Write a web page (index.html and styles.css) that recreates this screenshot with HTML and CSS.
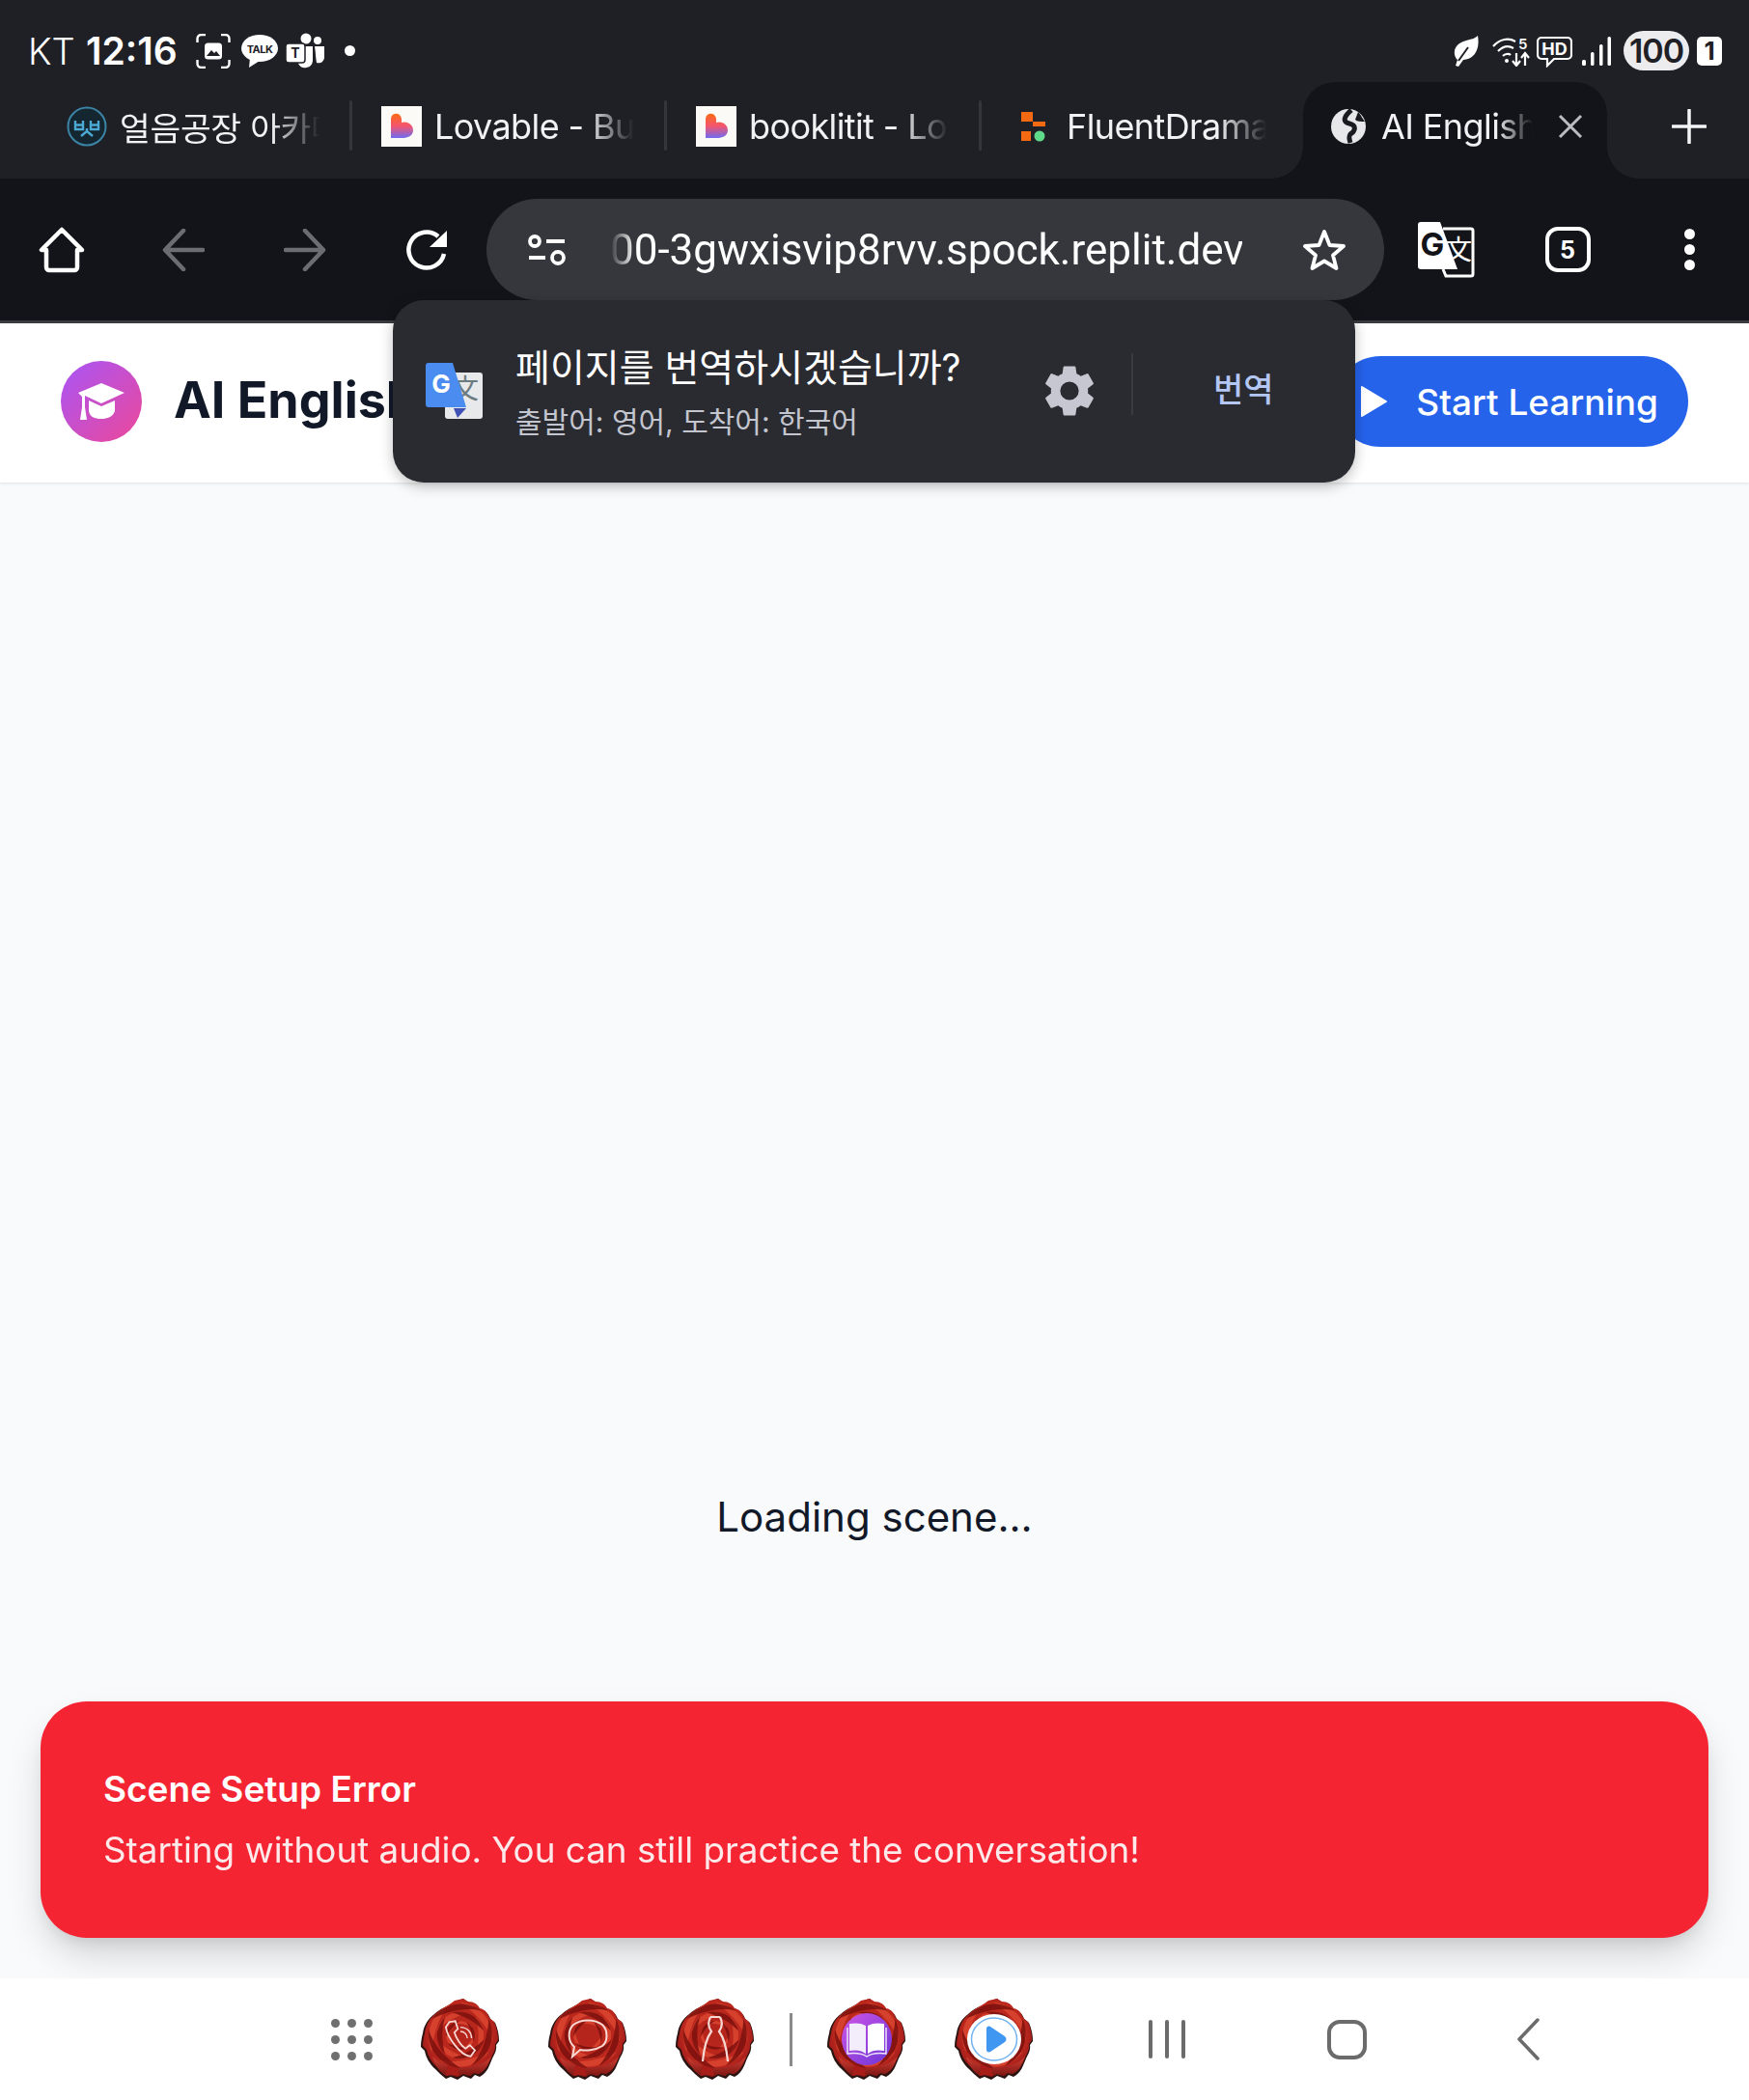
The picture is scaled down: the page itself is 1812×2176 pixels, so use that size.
FILE: index.html
```html
<!DOCTYPE html>
<html lang="en">
<head>
    <meta charset="UTF-8" />
    <meta name="viewport" content="width=device-width, initial-scale=1.0" />
    <title>AI English</title>
    <link rel="stylesheet" href="styles.css">
</head>
<body>

    <svg class="defs" width="0" height="0">
        <defs>
            <radialGradient id="roseFill" cx="50%" cy="45%" r="58%">
                <stop offset="0" stop-color="#b3241b" />
                <stop offset="0.7" stop-color="#bd281d" />
                <stop offset="1" stop-color="#94171a" />
            </radialGradient>
            <linearGradient id="roseBottom" x1="0" y1="0" x2="0" y2="1">
                <stop offset="0" stop-color="#cf3f33" />
                <stop offset="1" stop-color="#7a1412" />
            </linearGradient>
            <linearGradient id="heartFill" x1="0" y1="0" x2="0" y2="1">
                <stop offset="0" stop-color="#fb6a14" />
                <stop offset="0.5" stop-color="#f4556e" />
                <stop offset="1" stop-color="#6f6cf2" />
            </linearGradient>
            <linearGradient id="bookFill" x1="0" y1="0" x2="1" y2="1">
                <stop offset="0" stop-color="#cf55e6" />
                <stop offset="1" stop-color="#6a35d8" />
            </linearGradient>
            <path id="petalBig" d="M41 4 C60 6 76 22 74 44 C69 28 57 15 41 4Z" />
            <path id="petalMid" d="M41 13 C55 14 67 26 65 42 C61 31 52 21 41 13Z" />
            <path id="petalSmall" d="M42 23 C50 24 57 31 56 40 C53 33 48 27 42 23Z" />
            <symbol id="rose" viewBox="0 0 82 84">
                <path fill="#2b1411" d="M35 3 L44 0 L49 4 C55 4 59 7 61 11 C67 12 71 17 72 21 L77 25 C80 32 81 38 81 44 L78 48 C79 54 76 58 74 62 C71 69 69 77 61 81 L56 79 L52 83 L44 80 L38 84 L31 81 L26 83 C21 79 18 76 15 73 C9 68 5 60 4 54 L0 50 C0 44 1 40 2 36 C3 28 8 20 14 16 C20 10 28 8 35 3Z" />
                <path fill="url(#roseFill)" d="M35 2 L44 0 L49 3 C55 3 59 6 61 10 C67 11 70 16 71 20 L76 24 C79 31 80 37 80 43 L77 47 C78 53 75 57 73 61 C70 67 68 74 60 78 L55 77 L51 80 L44 78 L38 81 L31 79 L26 80 C22 77 19 74 17 71 C11 66 7 59 6 53 L2 49 C2 44 3 40 4 36 C5 28 9 20 15 16 C21 10 28 8 35 2Z" />
                <path fill="url(#roseBottom)" d="M12 60 C22 69 34 72 48 71 C58 70 66 67 73 60 C70 67 68 74 60 78 L55 77 L51 80 L44 78 L38 81 L31 79 L26 80 C22 77 19 74 17 71 C15 68 13 64 12 60Z" />
                <path fill="#a81d17" d="M28 66 L38 72 L40 80 L31 79 L26 80Z" />
                <g fill="#db4630" opacity="0.85">
                    <use href="#petalBig" />
                    <use href="#petalBig" transform="rotate(120 41 38)" />
                    <use href="#petalBig" transform="rotate(240 41 38)" />
                    <use href="#petalMid" transform="rotate(40 41 38)" />
                    <use href="#petalMid" transform="rotate(160 41 38)" />
                    <use href="#petalMid" transform="rotate(280 41 38)" />
                    <use href="#petalSmall" transform="rotate(80 41 38)" />
                    <use href="#petalSmall" transform="rotate(200 41 38)" />
                    <use href="#petalSmall" transform="rotate(320 41 38)" />
                </g>
                <g fill="#7c100e" opacity="0.85">
                    <use href="#petalBig" transform="rotate(60 41 38)" />
                    <use href="#petalBig" transform="rotate(180 41 38)" />
                    <use href="#petalBig" transform="rotate(300 41 38)" />
                    <use href="#petalMid" transform="rotate(100 41 38)" />
                    <use href="#petalMid" transform="rotate(220 41 38)" />
                    <use href="#petalMid" transform="rotate(340 41 38)" />
                    <use href="#petalSmall" transform="rotate(20 41 38)" />
                    <use href="#petalSmall" transform="rotate(140 41 38)" />
                    <use href="#petalSmall" transform="rotate(260 41 38)" />
                </g>
            </symbol>
        </defs>
    </svg>

    <div class="statusbar">
        <div class="status-left">
            <span class="carrier">KT</span>
            <span class="clock">12:16</span>
            <svg class="shot-icon" width="36" height="36" viewBox="0 0 36 36" fill="none" stroke="#fff" stroke-width="2.4">
                <path d="M1.500 9 V5 a4 4 0 0 1 4-4 H10 M26 1 h4.500 a4 4 0 0 1 4 4 V9 M34.500 27 v4 a4 4 0 0 1-4 4 H26 M10 35 H5.500 a4 4 0 0 1-4-4 V27" />
                <rect x="9" y="9.500" width="18" height="17" rx="3.500" fill="#fff" stroke="none" />
                <path d="M11 23 l5-6 3 3 2-2 4 5z" fill="#1f2026" stroke="none" />
            </svg>
            <svg class="talk-icon" width="38" height="34" viewBox="0 0 38 34">
                <ellipse cx="19" cy="14" rx="19" ry="14" fill="#fff" />
                <path d="M9 24 L8 34 L19 27z" fill="#fff" />
                <text x="19" y="18.500" class="talk-text">TALK</text>
            </svg>
            <svg class="teams-icon" width="40" height="38" viewBox="0 0 40 38">
                <circle cx="21" cy="6" r="5.500" fill="#fff" />
                <circle cx="33" cy="8" r="4" fill="#fff" />
                <path d="M14 14 H28 V29 a8 8 0 0 1-15 3z" fill="#fff" />
                <path d="M30 14 H40 V25 a6 6 0 0 1-8 6 C31 26 31 20 30 14z" fill="#fff" />
                <rect x="0" y="11" width="20" height="20" rx="3" fill="#fff" stroke="#1f2026" stroke-width="1.500" />
                <text x="10" y="26" class="teams-text">T</text>
            </svg>
            <span class="status-dot"></span>
        </div>
        <div class="status-right">
            <svg width="26" height="32" viewBox="0 0 26 32" fill="#fff">
                <path d="M25 0 C27 11 24 24 10 25 L5 32 L2 31 L4 25 C-1 20 0 12 6 8 C12 4 20 5 25 0Z" />
                <path d="M5 26 L15 12" stroke="#1f2026" stroke-width="2" fill="none" />
            </svg>
            <svg class="wifi-icon" width="40" height="32" viewBox="0 0 40 32" fill="none" stroke="#fff" stroke-width="2.200">
                <path d="M1 11 C8 3 17 2 24 6" />
                <path d="M6 16 C11 11 17 10 22 13" />
                <path d="M11 21 C13 19 17 18 19 20" />
                <circle cx="15" cy="26" r="2" fill="#fff" stroke="none" />
                <text x="27" y="14" class="wifi-text">5</text>
                <path d="M25 18 V30 M21 26 L25 31 L29 26 M34 31 V19 M30 23 L34 18 L38 23" />
            </svg>
            <svg class="hd-icon" width="37" height="34" viewBox="0 0 37 34">
                <path d="M5 3 H32 a4 4 0 0 1 4 4 V21 a4 4 0 0 1-4 4 H18 L11 32 V25 H5 a4 4 0 0 1-4-4 V7 a4 4 0 0 1 4-4Z" fill="none" stroke="#fff" stroke-width="2.200" />
                <text x="18.500" y="20.500" class="hd-text">HD</text>
            </svg>
            <svg class="signal-icon" width="30" height="30" viewBox="0 0 30 30" fill="#fff">
                <rect x="0" y="24" width="4" height="6" rx="1.500" />
                <rect x="9" y="16" width="3.500" height="14" rx="1.500" />
                <rect x="18" y="8" width="3.500" height="22" rx="1.500" />
                <rect x="26.500" y="0" width="3.500" height="30" rx="1.500" />
            </svg>
            <span class="battery">100</span>
            <span class="sim">1</span>
        </div>
    </div>

    <div class="tabstrip">
        <div class="tab">
            <svg class="favicon" width="42" height="42" viewBox="0 0 42 42">
                <circle cx="21" cy="21" r="19.500" fill="#14262f" stroke="#3c84a6" stroke-width="2" />
                <path d="M9 15 v9 h8 v-9 M9 19.500 h8 M25 15 v9 h8 v-9 M25 19.500 h8" fill="none" stroke="#4ba9d4" stroke-width="2.400" />
                <path d="M21 23 v3 l-6 5 M21 26 l6 5" fill="none" stroke="#4ba9d4" stroke-width="2.400" />
            </svg>
            <span class="tab-title tab-title-ko">얼음공장 아카데미</span>
        </div>
        <div class="tab">
            <svg class="favicon" width="42" height="42" viewBox="0 0 42 42">
                <rect width="42" height="42" fill="#fcfaf6" />
                <path d="M10 14 C10 6 20 6 21 13 V17 C27 15 33 19 33 25 C33 31 27 33 22 33 H10Z" fill="url(#heartFill)" />
            </svg>
            <span class="tab-title">Lovable - Build</span>
        </div>
        <div class="tab">
            <svg class="favicon" width="42" height="42" viewBox="0 0 42 42">
                <rect width="42" height="42" fill="#fcfaf6" />
                <path d="M10 14 C10 6 20 6 21 13 V17 C27 15 33 19 33 25 C33 31 27 33 22 33 H10Z" fill="url(#heartFill)" />
            </svg>
            <span class="tab-title">booklitit - Love</span>
        </div>
        <div class="tab tab-last">
            <svg class="favicon fluent-icon" width="26" height="52" viewBox="0 0 26 52">
                <rect x="0" y="11" width="12" height="10" fill="#f46a12" />
                <rect x="12" y="21" width="13" height="5" fill="#f46a12" />
                <rect x="0" y="31" width="10" height="10" fill="#f46a12" />
                <circle cx="19" cy="36" r="5.500" fill="#5fd98a" />
            </svg>
            <span class="tab-title">FluentDrama</span>
        </div>
        <div class="tab-active">
            <svg class="globe" width="36" height="36" viewBox="0 0 36 36">
                <circle cx="18" cy="18" r="18" fill="#e8e8ea" />
                <path d="M21 1 C14 7 11 13 19 15 C27 17 25 23 20 26 C18 28 19 32 20 35" fill="none" stroke="#1a1b20" stroke-width="5" />
                <path d="M28 3 C31 6 32 9 35 13 C31 13 27 13 25 11Z" fill="#1a1b20" />
            </svg>
            <span class="tab-title active-title">AI English Learn</span>
            <svg class="tab-close" width="26" height="26" viewBox="0 0 26 26" fill="none" stroke="#bcbdc2" stroke-width="3">
                <path d="M2 2 L24 24 M24 2 L2 24" />
            </svg>
        </div>
        <svg class="new-tab" width="36" height="36" viewBox="0 0 36 36" fill="none" stroke="#f4f4f6" stroke-width="3.500" stroke-linecap="round">
            <path d="M18 1 V35 M1 18 H35" />
        </svg>
    </div>

    <div class="toolbar">
        <span class="tool-btn">
            <svg width="48" height="48" viewBox="0 0 48 48" fill="none" stroke="#fff" stroke-width="4.500" stroke-linejoin="round">
                <path d="M24 3 L3 24 H8 V42 a3 3 0 0 0 3 3 H37 a3 3 0 0 0 3-3 V24 H45Z" />
            </svg>
        </span>
        <span class="tool-btn">
            <svg width="44" height="44" viewBox="0 0 44 44" fill="none" stroke="#6c6d72" stroke-width="4.500" stroke-linecap="round" stroke-linejoin="round">
                <path d="M42 22 H3 M22 2 L3 22 L22 42" />
            </svg>
        </span>
        <span class="tool-btn">
            <svg width="44" height="44" viewBox="0 0 44 44" fill="none" stroke="#6c6d72" stroke-width="4.500" stroke-linecap="round" stroke-linejoin="round">
                <path d="M2 22 H41 M22 2 L41 22 L22 42" />
            </svg>
        </span>
        <span class="tool-btn">
            <svg width="44" height="44" viewBox="0 0 44 44" fill="none" stroke="#fff" stroke-width="4.500">
                <path d="M40 26 A18.500 18.500 0 1 1 34 8" />
                <path d="M43 2 V19 H25Z" fill="#fff" stroke="none" />
            </svg>
        </span>
        <div class="omnibox">
            <svg class="tune" width="40" height="32" viewBox="0 0 40 32" fill="none" stroke="#fff" stroke-width="3.800">
                <circle cx="7" cy="7" r="5" />
                <path d="M19 7 H38 M1 24 H18" />
                <circle cx="31" cy="24" r="6" />
            </svg>
            <span class="url">00-3gwxisvip8rvv.spock.replit.dev</span>
            <svg class="star" width="46" height="44" viewBox="0 0 46 44" fill="none" stroke="#fff" stroke-width="3.800" stroke-linejoin="round">
                <path d="M23 3 L28.500 17 L43 18 L32 27.500 L35.500 41 L23 33.500 L10.500 41 L14 27.500 L3 18 L17.500 17Z" />
            </svg>
        </div>
        <span class="tool-btn">
            <svg width="60" height="60" viewBox="0 0 60 60">
                <path d="M27 8 H56 a2 2 0 0 1 2 2 V55 a2 2 0 0 1-2 2 H30 L27 50" fill="none" stroke="#fff" stroke-width="3" />
                <path d="M4 1 H24 L42 50 H4 a3 3 0 0 1-3-3 V4 a3 3 0 0 1 3-3Z" fill="#fff" />
                <text x="16" y="36" class="g-dark">G</text>
                <text x="43" y="40" class="wen-white">文</text>
            </svg>
        </span>
        <span class="tool-btn">
            <span class="tab-count">5</span>
        </span>
        <span class="tool-btn menu-dots">
            <i></i><i></i><i></i>
        </span>
    </div>

    <main class="page">
        <header class="site-head">
            <div class="brand">
                <span class="brand-logo">
                    <svg width="48" height="44" viewBox="0 0 48 44" fill="#fff">
                        <path d="M24 3 L48 13 L24 24 L7 16 V20 L0 13Z" />
                        <path d="M11 21 L24 27 L38 21 V32 C36 38 30 40 24 40 C17 40 12 38 11 32Z" />
                        <path d="M4 15 H7 V28 L9 41 H2 L4 28Z" />
                    </svg>
                </span>
                <span class="brand-name">AI English</span>
            </div>
            <button class="start-btn">
                <svg width="28" height="34" viewBox="0 0 28 34" fill="#fff">
                    <path d="M2 2 L27 17 L2 32Z" stroke="#fff" stroke-width="2" stroke-linejoin="round" />
                </svg>
                Start Learning
            </button>
        </header>

        <div class="scene">
            <p class="loading">Loading scene...</p>
        </div>

        <div class="toast">
            <div class="toast-title">Scene Setup Error</div>
            <div class="toast-msg">Starting without audio. You can still practice the conversation!</div>
        </div>
    </main>

    <footer class="navbar">
        <span class="grid-dots">
            <i></i><i></i><i></i><i></i><i></i><i></i><i></i><i></i><i></i>
        </span>
        <div class="dock">
            <span class="app">
                <svg class="rose" width="82" height="84"><use href="#rose" /></svg>
                <svg class="app-glyph" width="32" height="40" viewBox="0 0 36 44" fill="none" stroke="#f7d9d3" stroke-width="2">
                    <path d="M5 2 L12 1 L15 10 L11 14 C13 21 19 30 24 33 L29 29 L35 35 L30 42 C18 41 3 20 1 8Z" />
                    <path d="M18 13 C23 13 26 17 26 21 M18 8 C26 8 31 14 31 21" stroke-width="1.500" />
                </svg>
            </span>
            <span class="app">
                <svg class="rose" width="82" height="84"><use href="#rose" /></svg>
                <svg class="app-glyph" width="42" height="44" viewBox="0 0 42 44" fill="none" stroke="#f7d9d3" stroke-width="2">
                    <path d="M6 7 C14 1 28 1 36 7 C42 13 42 24 36 29 C28 34 18 34 13 33 L5 40 L7 30 C0 24 0 13 6 7Z" />
                </svg>
            </span>
            <span class="app">
                <svg class="rose" width="82" height="84"><use href="#rose" /></svg>
                <svg class="app-glyph" width="28" height="48" viewBox="0 0 28 48" fill="none" stroke="#f7d9d3" stroke-width="2.200">
                    <path d="M9 1 C6 7 7 12 10 16 C4 24 2 36 1 47 M19 1 C22 7 21 12 18 16 C24 24 26 36 27 47 M9 1 H19" />
                </svg>
            </span>
            <span class="dock-sep"></span>
            <span class="app">
                <svg class="rose" width="82" height="84"><use href="#rose" /></svg>
                <svg class="app-glyph" width="52" height="54" viewBox="0 0 52 54">
                    <ellipse cx="26" cy="27" rx="26" ry="27" fill="url(#bookFill)" />
                    <path d="M25 13 C20 10 14 10 8 11 V39 C14 38 20 38 25 42Z" fill="#f2ecfb" />
                    <path d="M27 13 C32 10 38 10 44 11 V39 C38 38 32 38 27 42Z" fill="#fff" />
                    <path d="M6 15 V42 C14 41 20 41 26 45 C32 41 38 41 46 42 V15" fill="none" stroke="#ece4f8" stroke-width="1.500" />
                </svg>
            </span>
            <span class="app">
                <svg class="rose" width="82" height="84"><use href="#rose" /></svg>
                <svg class="app-glyph" width="56" height="52" viewBox="0 0 56 52">
                    <ellipse cx="28" cy="26" rx="28" ry="26" fill="#fff" />
                    <ellipse cx="28" cy="26" rx="23.500" ry="22" fill="none" stroke="#74b4f0" stroke-width="1.500" />
                    <path d="M20 15 C20 13 22 12 24 13 L39 23 C41 25 41 27 39 29 L24 39 C22 40 20 39 20 37Z" fill="#3f97f2" />
                </svg>
            </span>
        </div>
        <span class="nav-recent"><i></i><i></i><i></i></span>
        <span class="nav-home"></span>
        <svg class="nav-back" width="24" height="44" viewBox="0 0 24 44" fill="none" stroke="#6b6b6b" stroke-width="3.500" stroke-linecap="round" stroke-linejoin="round">
            <path d="M22 2 L3 22 L22 42" />
        </svg>
    </footer>

    <div class="translate-pop">
        <svg class="gt-logo" width="60" height="60" viewBox="0 0 60 60">
            <rect x="20" y="11" width="39" height="48" rx="3" fill="#e8e9ea" />
            <text x="41" y="38" class="wen-dark">文</text>
            <path d="M29 48 L33 58 L42 48Z" fill="#3f51b5" />
            <path d="M3 1 H28 L42 47 H3 a3 3 0 0 1-3-3 V4 a3 3 0 0 1 3-3Z" fill="#4a8cf0" />
            <text x="16" y="32" class="g-white">G</text>
        </svg>
        <div class="pop-text">
            <div class="pop-title">페이지를 번역하시겠습니까?</div>
            <div class="pop-sub">출발어: 영어, 도착어: 한국어</div>
        </div>
        <svg class="gear" width="64" height="64" viewBox="0 0 24 24" fill="#c6c7d0">
            <path d="M19.140 12.940c.04-.3.060-.61.060-.94s-.020-.64-.070-.94l2.030-1.580a.49.49 0 0 0 .12-.61l-1.920-3.320a.49.49 0 0 0-.59-.22l-2.390.96a7 7 0 0 0-1.620-.94l-.36-2.540a.48.48 0 0 0-.48-.41h-3.840a.47.470 0 0 0-.47.410l-.36 2.540a7.400 7.400 0 0 0-1.620.94l-2.390-.96a.48.48 0 0 0-.59.220L2.740 8.870a.47.47 0 0 0 .12.610l2.030 1.580c-.05.3-.09.63-.09.94s.020.64.070.94l-2.030 1.580a.49.49 0 0 0-.12.61l1.920 3.320c.12.22.37.29.59.220l2.390-.96c.5.380 1.030.7 1.620.94l.36 2.540c.05.24.24.41.48.41h3.840c.24 0 .44-.17.470-.41l.36-2.540a7 7 0 0 0 1.620-.94l2.390.96c.22.080.47 0 .59-.22l1.920-3.320a.47.47 0 0 0-.12-.61l-2.010-1.580zM12 15.600A3.600 3.600 0 1 1 12 8.400a3.600 3.600 0 0 1 0 7.200z" />
        </svg>
        <span class="pop-sep"></span>
        <span class="pop-action">번역</span>
    </div>

</body>
</html>
```

FILE: styles.css
```css
body {
    font-family: Inter, "Noto Sans CJK KR", sans-serif;
    margin: 0;
    width: 1812px;
    height: 2176px;
    display: flex;
    flex-direction: column;
    position: relative;
    overflow: hidden;
    background: #f9fafb;
}

.defs {
    position: absolute;
}

/* status bar */
.statusbar {
    height: 85px;
    flex: none;
    background: #1f2026;
    color: #fff;
    display: flex;
    align-items: center;
    justify-content: space-between;
    padding: 20px 28px 0 29px;
    box-sizing: border-box;
}

.status-left,
.status-right {
    display: flex;
    align-items: center;
}

.carrier {
    font-size: 38px;
    font-weight: 300;
    width: 60px;
}

.clock {
    font-size: 39px;
    font-weight: 600;
    width: 114px;
}

.talk-icon {
    margin-left: 11px;
}

.teams-icon {
    margin-left: 8px;
}

.status-dot {
    width: 11px;
    height: 11px;
    border-radius: 50%;
    background: #fff;
    margin-left: 21px;
}

.talk-text {
    font-size: 11px;
    font-weight: 700;
    text-anchor: middle;
    fill: #1f2026;
    letter-spacing: -0.5px;
}

.teams-text {
    font-size: 14px;
    font-weight: 700;
    text-anchor: middle;
    fill: #1f2026;
}

.wifi-text {
    font-size: 15px;
    font-weight: 600;
    fill: #fff;
    stroke: none;
}

.status-right svg + svg {
    margin-left: 6px;
}

.status-right .wifi-icon {
    margin-left: 14px;
}

.status-right .signal-icon {
    margin-left: 10px;
}

.hd-text {
    font-size: 18px;
    font-weight: 700;
    text-anchor: middle;
    fill: #fff;
}

.battery {
    background: #ececee;
    color: #1f2026;
    font-size: 34px;
    font-weight: 600;
    width: 68px;
    height: 41px;
    border-radius: 21px;
    margin-left: 13px;
    display: flex;
    align-items: center;
    justify-content: center;
    letter-spacing: -1px;
}

.sim {
    background: #fff;
    color: #1f2026;
    font-size: 26px;
    font-weight: 700;
    width: 26px;
    height: 30px;
    border-radius: 5px;
    margin-left: 8px;
    display: flex;
    align-items: center;
    justify-content: center;
}

/* tabs */
.tabstrip {
    height: 100px;
    flex: none;
    background: #1f2026;
    display: flex;
    padding-left: 39px;
    box-sizing: border-box;
    color: #f2f2f4;
}

.tab {
    width: 326px;
    height: 100px;
    flex: none;
    display: flex;
    align-items: center;
    padding-left: 30px;
    box-sizing: border-box;
    position: relative;
    padding-bottom: 8px;
}

.tab::after {
    content: "";
    position: absolute;
    right: 0;
    top: 19px;
    width: 3px;
    height: 52px;
    border-radius: 2px;
    background: #35363b;
}

.tab-last {
    width: 333px;
    padding-left: 41px;
}

.tab-last::after {
    display: none;
}

.favicon {
    flex: none;
}

.tab-title {
    font-size: 36px;
    letter-spacing: -0.6px;
    margin-left: 13px;
    width: 207px;
    overflow: hidden;
    white-space: nowrap;
    -webkit-mask-image: linear-gradient(to right, #000 76%, transparent 100%);
    mask-image: linear-gradient(to right, #000 76%, transparent 100%);
}

.tab-title-ko {
    font-size: 34.500px;
    letter-spacing: -0.3px;
}

.fluent-icon + .tab-title {
    margin-left: 21px;
}

.tab-active {
    width: 315px;
    height: 100px;
    flex: none;
    background: #131419;
    border-radius: 33px 33px 0 0;
    display: flex;
    align-items: center;
    padding: 0 0 8px 29px;
    box-sizing: border-box;
    position: relative;
}

.tab-active::before,
.tab-active::after {
    content: "";
    position: absolute;
    bottom: 0;
    width: 33px;
    height: 33px;
}

.tab-active::before {
    left: -33px;
    background: radial-gradient(circle at 0 0, transparent 32.500px, #131419 33px);
}

.tab-active::after {
    right: -33px;
    background: radial-gradient(circle at 100% 0, transparent 32.500px, #131419 33px);
}

.active-title {
    width: 157px;
    margin-left: 16px;
}

.tab-close {
    margin-left: 26px;
}

.new-tab {
    margin: 28px 0 0 67px;
}

/* toolbar */
.toolbar {
    height: 150px;
    flex: none;
    background: #131419;
    border-bottom: 3px solid #3a3b40;
    box-sizing: border-box;
    display: flex;
    align-items: center;
    padding-left: 1px;
}

.tool-btn {
    width: 126px;
    flex: none;
    display: flex;
    align-items: center;
    justify-content: center;
}

.omnibox {
    width: 930px;
    height: 105px;
    flex: none;
    background: #36373d;
    border-radius: 53px;
    display: flex;
    align-items: center;
    box-sizing: border-box;
    padding-left: 43px;
    color: #fff;
    margin: 0 1px 0 -1px;
}

.url {
    font-family: Roboto, sans-serif;
    font-size: 44px;
    width: 655px;
    margin-left: 45px;
    white-space: nowrap;
    overflow: hidden;
    -webkit-mask-image: linear-gradient(to right, transparent 0, #000 26px);
    mask-image: linear-gradient(to right, transparent 0, #000 26px);
}

.star {
    margin-left: 62px;
}

.g-dark {
    font-size: 33px;
    font-weight: 700;
    text-anchor: middle;
    fill: #131419;
}

.wen-white {
    font-size: 28px;
    text-anchor: middle;
    fill: #fff;
}

.tab-count {
    width: 47px;
    height: 47px;
    border: 4.500px solid #fff;
    border-radius: 13px;
    box-sizing: border-box;
    color: #fff;
    font-size: 25px;
    font-weight: 700;
    display: flex;
    align-items: center;
    justify-content: center;
}

.menu-dots {
    flex-direction: column;
    gap: 5px;
}

.menu-dots i {
    width: 11px;
    height: 11px;
    border-radius: 50%;
    background: #fff;
}

/* page */
.page {
    flex: 1;
    display: flex;
    flex-direction: column;
    min-height: 0;
    overflow: hidden;
}

.site-head {
    height: 165px;
    flex: none;
    background: #fff;
    box-shadow: 0 1px 3px rgba(0, 0, 0, 0.1);
    display: flex;
    align-items: center;
    justify-content: space-between;
    padding: 0 63px 3px;
    box-sizing: border-box;
}

.brand {
    display: flex;
    align-items: center;
}

.brand-logo {
    width: 84px;
    height: 84px;
    border-radius: 50%;
    background: linear-gradient(135deg, #a855f7, #ec4899);
    display: flex;
    align-items: center;
    justify-content: center;
}

.brand-name {
    font-size: 52px;
    font-weight: 700;
    color: #111827;
    margin: 0 0 4px 33px;
}

.start-btn {
    height: 94px;
    border: none;
    border-radius: 47px;
    background: #2563eb;
    color: #fff;
    font-family: inherit;
    font-size: 37px;
    font-weight: 500;
    display: flex;
    align-items: center;
    gap: 30px;
    padding: 0 31px 0 26px;
}

.scene {
    flex: 1;
    display: flex;
    align-items: flex-end;
    justify-content: center;
    padding-bottom: 166px;
}

.loading {
    margin: 0;
    font-size: 42px;
    color: #111827;
}

.toast {
    flex: none;
    height: 245px;
    margin: 0 42px;
    margin-bottom: 42px;
    background: #f42432;
    border-radius: 48px;
    box-shadow: 0 20px 40px -6px rgba(0, 0, 0, 0.18), 0 8px 16px -6px rgba(0, 0, 0, 0.1);
    padding: 65px 65px 0;
    box-sizing: border-box;
    color: #fff;
}

.toast-title {
    font-size: 37px;
    font-weight: 600;
    line-height: 52px;
}

.toast-msg {
    font-size: 36.800px;
    line-height: 52px;
    margin-top: 11px;
    opacity: 0.9;
}

/* nav bar */
.navbar {
    height: 126px;
    flex: none;
    background: #fff;
    display: flex;
    align-items: center;
    padding-left: 343px;
    box-sizing: border-box;
}

.grid-dots {
    width: 43px;
    display: grid;
    grid-template-columns: repeat(3, 9px);
    gap: 8px;
}

.grid-dots i {
    width: 9px;
    height: 9px;
    border-radius: 50%;
    background: #6f6f6f;
}

.dock {
    display: flex;
    align-items: center;
    gap: 50px;
    margin-left: 50px;
}

.app {
    width: 82px;
    height: 84px;
    display: grid;
    place-items: center;
}

.app > svg {
    grid-area: 1 / 1;
}

.dock-sep {
    width: 3px;
    height: 55px;
    background: #8a8a8a;
    margin: 0 -14px;
}

.nav-recent {
    display: flex;
    gap: 13px;
    margin-left: 119px;
}

.nav-recent i {
    width: 4px;
    height: 40px;
    border-radius: 2px;
    background: #6b6b6b;
}

.nav-home {
    width: 41px;
    height: 41px;
    box-sizing: border-box;
    border: 4px solid #6b6b6b;
    border-radius: 13px;
    margin-left: 147px;
}

.nav-back {
    margin-left: 155px;
}

/* translate bubble, sits over the toolbar and page header */
.translate-pop {
    position: absolute;
    left: 407px;
    top: 311px;
    width: 997px;
    height: 189px;
    background: #2a2b31;
    border-radius: 32px;
    box-shadow: 0 4px 14px rgba(0, 0, 0, 0.25);
    display: flex;
    align-items: center;
    padding: 11px 0 0 34px;
    box-sizing: border-box;
    color: #fff;
}

.gt-logo {
    flex: none;
    margin-bottom: 12px;
}

.wen-dark {
    font-size: 28px;
    text-anchor: middle;
    fill: #6b7b80;
}

.g-white {
    font-size: 26px;
    font-weight: 700;
    text-anchor: middle;
    fill: #fff;
}

.pop-text {
    width: 481px;
    flex: none;
    margin-left: 33px;
    margin-bottom: 8px;
}

.pop-title {
    font-size: 39px;
    line-height: 50px;
    white-space: nowrap;
}

.pop-sub {
    font-size: 30px;
    line-height: 44px;
    margin-top: 9px;
    color: #c4c6cf;
    white-space: nowrap;
}

.gear {
    flex: none;
    margin: 0 0 12px 61px;
}

.pop-sep {
    width: 2px;
    height: 64px;
    background: #3a3b42;
    margin: 0 0 26px 32px;
}

.pop-action {
    font-size: 34px;
    font-weight: 500;
    color: #b4c6f4;
    margin: 0 0 20px 83px;
}
```
